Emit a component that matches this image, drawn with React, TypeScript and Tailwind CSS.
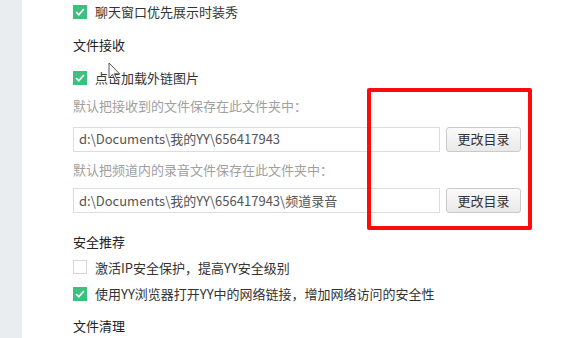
import React from 'react';

const Check: React.FC<{ on?: boolean }> = ({ on }) =>
  on ? (
    <span className="w-[14px] h-[14px] bg-[#3dbf7e] flex items-center justify-center shrink-0">
      <svg viewBox="0 0 14 14" className="w-[12px] h-[12px]">
        <path d="M2.5 7.2 L5.6 10.2 L11.5 3.5" fill="none" stroke="#fff" strokeWidth="2" />
      </svg>
    </span>
  ) : (
    <span className="w-[14px] h-[14px] border border-[#d2d8dc] bg-white shrink-0" />
  );

const Row: React.FC<{ on?: boolean; text: string; className?: string }> = ({ on, text, className }) => (
  <div className={`h-[24px] flex items-center gap-[8px] text-[#333] ${className ?? ''}`}>
    <Check on={on} />
    <span>{text}</span>
  </div>
);

const PathRow: React.FC<{ value: string; className?: string }> = ({ value, className }) => (
  <div className={`flex items-center gap-[6px] ${className ?? ''}`}>
    <div className="w-[367px] h-[25px] border border-[#d8dfe4] bg-white flex items-center px-[5px] text-[#555]">
      {value}
    </div>
    <button className="w-[75px] h-[25px] border border-[#cacaca] rounded-[3px] bg-gradient-to-b from-[#fbfbfb] to-[#e9e9e9] text-[#333]">
      更改目录
    </button>
  </div>
);

export default function App() {
  return (
    <div
      className="relative w-[567px] h-[338px] overflow-hidden flex bg-white text-[13px]"
      style={{ fontFamily: '"Microsoft YaHei", "Noto Sans CJK SC", sans-serif' }}
    >
      <div className="w-[22px] bg-[#e9edf0] shrink-0" />
      <div className="flex flex-col pl-[51px]">
        <Row on text="聊天窗口优先展示时装秀" />
        <div className="h-[24px] mt-[9px] flex items-center text-[#222]">文件接收</div>
        <Row on text="点击加载外链图片" className="mt-[9px]" />
        <div className="h-[24px] mt-[4px] flex items-center text-[#a0a0a0]">默认把接收到的文件保存在此文件夹中：</div>
        <PathRow value="d:\Documents\我的YY\656417943" className="mt-[9px]" />
        <div className="h-[24px] mt-[6px] flex items-center text-[#a0a0a0]">默认把频道内的录音文件保存在此文件夹中：</div>
        <PathRow value="d:\Documents\我的YY\656417943\频道录音" className="mt-[7px]" />
        <div className="h-[24px] mt-[16px] flex items-center text-[#222]">安全推荐</div>
        <Row text="激活IP安全保护，提高YY安全级别" className="mt-[2px]" />
        <Row on text="使用YY浏览器打开YY中的网络链接，增加网络访问的安全性" className="mt-[3px]" />
        <div className="h-[24px] mt-[8px] flex items-center text-[#222]">文件清理</div>
      </div>

      {/* red annotation box */}
      <div className="absolute left-[367px] top-[88px] w-[165px] h-[142px] border-[4px] border-[#ff0a0a] rounded-[2px]" />

      {/* mouse cursor */}
      <svg className="absolute left-[108px] top-[62px]" width="14" height="20" viewBox="0 0 14 20">
        <path d="M1 1 L1 16 L4.5 12.5 L7.5 19 L9.5 18 L6.5 11.8 L11.5 11.8 Z" fill="#fff" fillOpacity="0.85" stroke="#555" strokeWidth="1" />
      </svg>
    </div>
  );
}
